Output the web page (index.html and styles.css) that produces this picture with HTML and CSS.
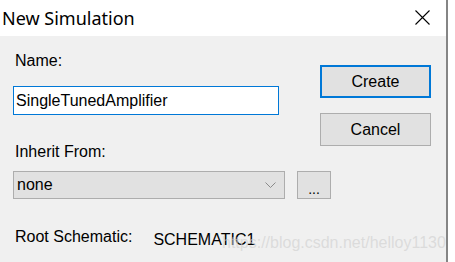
FILE: index.html
```html
<!DOCTYPE html>
<html lang="en">
<head>
	<meta charset="UTF-8">
	<title>New Simulation</title>
	<link rel="stylesheet" href="styles.css">
</head>
<body>
	<div class="dialog">
		<div class="title_bar">
			<span class="title">New Simulation</span>
			<svg class="close" width="15" height="15" viewBox="0 0 15 15">
				<path d="M0.5 0.5 L14.5 14.5 M14.5 0.5 L0.5 14.5" stroke="#000" stroke-width="1.1" fill="none"/>
			</svg>
		</div>
		<div class="form">
			<div class="label name_label">Name:</div>
			<input class="name_input" type="text" value="SingleTunedAmplifier">
			<div class="actions">
				<div class="btn btn_default">Create</div>
				<div class="btn">Cancel</div>
			</div>
			<div class="label inherit_label">Inherit From:</div>
			<div class="inherit_row">
				<div class="combo">
					<span>none</span>
					<svg class="arrow" width="11" height="6" viewBox="0 0 11 6">
						<path d="M0.5 0.5 L5.5 5.5 L10.5 0.5" stroke="#8a8a8a" stroke-width="1" fill="none"/>
					</svg>
				</div>
				<div class="btn_more">...</div>
			</div>
			<div class="root_row">
				<span class="label">Root Schematic:</span>
				<span class="root_value">SCHEMATIC1</span>
			</div>
		</div>
		<div class="watermark">https://blog.csdn.net/helloy1130</div>
	</div>
</body>
</html>
```

FILE: styles.css
```css
body{
	margin:0;
	padding:0;
	background-color:#fff;
}

.dialog{
	width:446px;
	height:262px;
	border-right:2px solid #858585;
	background-color:#f0f0f0;
	position:relative;
	overflow:hidden;
	font-family:"Liberation Sans", Arial, sans-serif;
	font-size:16px;
	color:#000;
}

.title_bar{
	height:36px;
	background-color:#fff;
	display:flex;
	align-items:center;
	justify-content:space-between;
	padding:0 16px 0 2px;
}

.title{
	font-family:"Noto Sans", "Open Sans", sans-serif;
	font-size:18px;
	margin-top:-1px;
}

.close{
	display:block;
	margin-top:-1px;
}

.form{
	display:grid;
	grid-template-columns:272px 35px 111px;
	padding:16px 0 0 13px;
}

.label{
	line-height:18px;
	padding-left:2px;
}

.name_label{
	grid-column:1 / 3;
	grid-row:1;
}

.name_input{
	grid-column:1 / 3;
	grid-row:2;
	width:266px;
	height:29px;
	box-sizing:border-box;
	margin:16px 0 0;
	padding:0 2px;
	border:1px solid #0078d7;
	outline:none;
	background-color:#fff;
	font-family:"Liberation Sans", Arial, sans-serif;
	font-size:16px;
	color:#000;
}

.actions{
	grid-column:3;
	grid-row:1 / 4;
	display:flex;
	flex-direction:column;
	gap:15px;
	margin-top:13px;
}

.btn{
	height:33px;
	box-sizing:border-box;
	border:1px solid #adadad;
	background-color:#e1e1e1;
	display:flex;
	align-items:center;
	justify-content:center;
}

.btn_default{
	border:2px solid #0078d7;
}

.inherit_label{
	grid-column:1 / 3;
	grid-row:3;
	margin-top:28px;
}

.inherit_row{
	grid-column:1 / 4;
	grid-row:4;
	display:flex;
	gap:12px;
	margin-top:10px;
}

.combo{
	width:272px;
	height:28px;
	box-sizing:border-box;
	border:1px solid #adadad;
	background-color:#e1e1e1;
	display:flex;
	align-items:center;
	justify-content:space-between;
	padding:0 8px 0 3px;
}

.arrow{
	display:block;
}

.btn_more{
	width:34px;
	height:28px;
	box-sizing:border-box;
	border:1px solid #adadad;
	background-color:#e1e1e1;
	display:flex;
	align-items:flex-end;
	justify-content:center;
	line-height:18px;
	font-size:14px;
	color:#000;
}

.root_row{
	grid-column:1 / 4;
	grid-row:5;
	display:flex;
	align-items:flex-start;
	margin-top:29px;
}

.root_value{
	margin:3px 0 0 21px;
	line-height:18px;
}

.watermark{
	position:absolute;
	left:222px;
	top:234px;
	font-size:16px;
	line-height:18px;
	color:rgba(210,210,210,0.7);
	white-space:nowrap;
}
```
